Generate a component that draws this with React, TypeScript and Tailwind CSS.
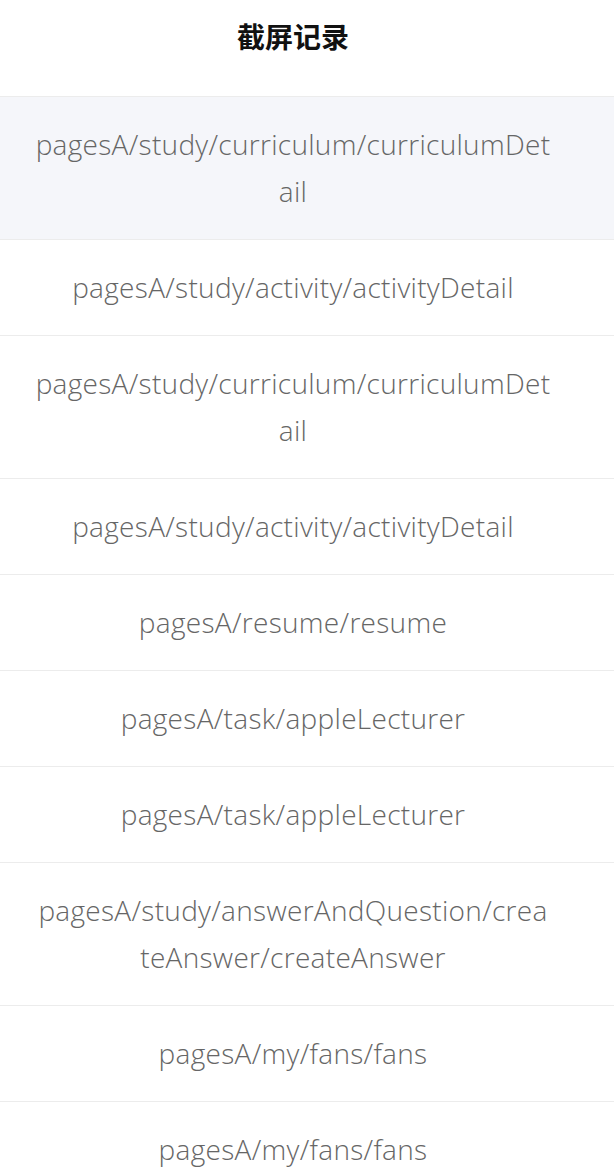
const records: string[][] = [
  ["pagesA/study/curriculum/curriculumDet", "ail"],
  ["pagesA/study/activity/activityDetail"],
  ["pagesA/study/curriculum/curriculumDet", "ail"],
  ["pagesA/study/activity/activityDetail"],
  ["pagesA/resume/resume"],
  ["pagesA/task/appleLecturer"],
  ["pagesA/task/appleLecturer"],
  ["pagesA/study/answerAndQuestion/crea", "teAnswer/createAnswer"],
  ["pagesA/my/fans/fans"],
  ["pagesA/my/fans/fans"],
];

export default function App() {
  return (
    <div className="min-h-screen bg-white font-['Open_Sans','Noto_Sans_CJK_SC',sans-serif]">
      {/* 标题栏 */}
      <header className="flex h-[97px] items-start justify-center border-b border-[#ececec] pr-[28px] pt-[18px]">
        <h1 className="font-['Noto_Sans_CJK_SC',sans-serif] text-[28px] font-bold leading-[36px] text-[#111]">
          截屏记录
        </h1>
      </header>

      <ul>
        {records.map((lines, i) => (
          <li
            key={i}
            className={`border-b border-[#ececec] py-6 pl-5 pr-[48px] text-center text-[28px] font-light leading-[47px] tracking-[0.3px] text-[#666] ${
              i === 0 ? "bg-[#f5f6fa]" : "bg-white"
            }`}
          >
            {lines.map((line, j) => (
              <div key={j} className="whitespace-nowrap">
                {line}
              </div>
            ))}
          </li>
        ))}
      </ul>
    </div>
  );
}
